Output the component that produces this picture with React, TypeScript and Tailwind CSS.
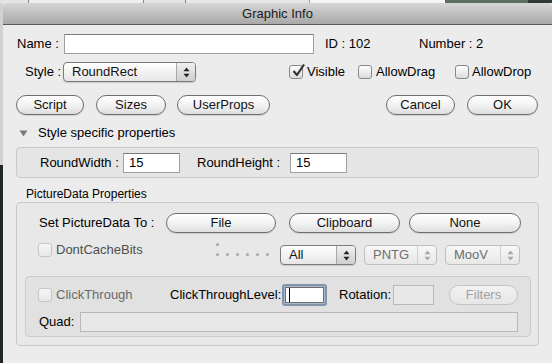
import React from "react";

const Btn = ({ label, w, disabled = false }: { label: string; w: string; disabled?: boolean }) => (
  <div
    className={`${w} h-[20px] shrink-0 rounded-full border flex items-center justify-center text-[13px] ${
      disabled
        ? "border-[#c4c4c4] text-[#a2a2a2] bg-linear-to-b from-[#f2f2f2] to-[#e6e6e6]"
        : "border-[#6e6e6e] text-[#111] bg-linear-to-b from-[#ffffff] via-[#f3f3f3] to-[#dedede] shadow-[0_1px_1px_rgba(0,0,0,0.12)]"
    }`}
  >
    {label}
  </div>
);

const Arrows = ({ color }: { color: string }) => (
  <svg width="7" height="11" viewBox="0 0 7 11">
    <path d="M3.5 0.5 L6.5 4.2 L0.5 4.2 Z" fill={color} />
    <path d="M3.5 10.5 L6.5 6.8 L0.5 6.8 Z" fill={color} />
  </svg>
);

const Popup = ({ label, w, disabled = false }: { label: string; w: string; disabled?: boolean }) => (
  <div
    className={`${w} h-[20px] shrink-0 rounded-[4px] border flex items-stretch text-[13px] overflow-hidden ${
      disabled
        ? "border-[#c0c0c0] text-[#6e6e6e] bg-linear-to-b from-[#f7f7f7] to-[#e8e8e8]"
        : "border-[#7a7a7a] text-[#111] bg-linear-to-b from-[#ffffff] to-[#e6e6e6] shadow-[0_1px_1px_rgba(0,0,0,0.15)]"
    }`}
  >
    <div className="flex-1 flex items-center pl-[8px]">{label}</div>
    <div
      className={`w-[19px] flex items-center justify-center border-l ${
        disabled ? "border-[#d0d0d0]" : "border-[#a8a8a8] bg-linear-to-b from-[#f0f0f0] to-[#cfcfcf]"
      }`}
    >
      <Arrows color={disabled ? "#a8a8a8" : "#222"} />
    </div>
  </div>
);

const Check = ({ checked = false, disabled = false }: { checked?: boolean; disabled?: boolean }) => (
  <div
    className={`w-[14px] h-[14px] shrink-0 rounded-[3px] border relative ${
      disabled
        ? "border-[#c6c6c6] bg-linear-to-b from-[#f6f6f6] to-[#e8e8e8]"
        : "border-[#888] bg-linear-to-b from-[#ffffff] to-[#dcdcdc]"
    }`}
  >
    {checked && (
      <svg className="absolute -top-[3px] left-[1px]" width="15" height="15" viewBox="0 0 15 15">
        <path d="M2.5 8 L6 12 L13 1.5" stroke="#333" strokeWidth="2.2" fill="none" strokeLinejoin="round" />
      </svg>
    )}
  </div>
);

const Field = ({ w, value, disabled = false }: { w: string; value?: string; disabled?: boolean }) => (
  <div
    className={`${w} h-[20px] shrink-0 border flex items-center pl-[5px] text-[13px] ${
      disabled
        ? "h-[19px] bg-[#e8e8e8] border-[#b8b8b8]"
        : "bg-white border-[#a0a0a0] border-t-[#7c7c7c]"
    }`}
  >
    {value}
  </div>
);

export default function App() {
  return (
    <div className="w-[552px] h-[363px] overflow-hidden bg-[#ececec] font-['Liberation_Sans',Arial,sans-serif] text-black flex flex-col">
      {/* desktop strip behind the sheet */}
      <div className="h-[3px] flex shrink-0">
        <div className="w-[28px] bg-[#e4e4e4]" />
        <div className="w-[1px] bg-[#8a8a8a]" />
        <div className="w-[114px] bg-[#eeeeee]" />
        <div className="w-[1px] bg-[#8a8a8a]" />
        <div className="w-[41px] bg-[#e2e2e2]" />
        <div className="w-[1px] bg-[#8a8a8a]" />
        <div className="w-[123px] bg-[#e6e6e6]" />
        <div className="w-[1px] bg-[#9a9a9a]" />
        <div className="w-[135px] bg-[#f4f4f4]" />
        <div className="w-[83px] bg-[#5d6d62]" />
        <div className="flex-1 bg-[#2f3a33]" />
      </div>

      <div className="flex flex-1">
        <div className="w-[3px] shrink-0 flex flex-col">
          <div className="h-[162px] bg-[#d2d2d2]" />
          <div className="flex-1 bg-[#1f2924]" />
        </div>

        <div className="flex-1 flex flex-col rounded-tl-[4px] rounded-tr-[4px] overflow-hidden bg-[#ececec]">
          {/* title bar */}
          <div className="h-[22px] shrink-0 border-b border-[#5a5a5a] bg-linear-to-b from-[#d6d6d6] to-[#a9a9a9] flex items-center justify-center text-[13px] text-[#1a1a1a]">
            Graphic Info
          </div>

          {/* Name row */}
          <div className="flex items-center h-[20px] mt-[9px] ml-[14px] text-[13px]">
            <div className="w-[47px]">Name :</div>
            <Field w="w-[250px]" />
            <div className="w-[94px] ml-[11px]">ID : 102</div>
            <div>Number : 2</div>
          </div>

          {/* Style row */}
          <div className="flex items-center h-[20px] mt-[8px] ml-[22px] text-[13px]">
            <div className="w-[38px]">Style :</div>
            <Popup label="RoundRect" w="w-[133px]" />
            <div className="ml-[93px] w-[69px] flex items-center gap-[4px]">
              <Check checked />
              <span>Visible</span>
            </div>
            <div className="w-[97px] flex items-center gap-[4px]">
              <Check />
              <span>AllowDrag</span>
            </div>
            <div className="flex items-center gap-[3px]">
              <Check />
              <span>AllowDrop</span>
            </div>
          </div>

          {/* buttons row */}
          <div className="flex items-center mt-[13px] ml-[13px]">
            <Btn label="Script" w="w-[68px]" />
            <div className="ml-[12px]">
              <Btn label="Sizes" w="w-[70px]" />
            </div>
            <div className="ml-[11px]">
              <Btn label="UserProps" w="w-[93px]" />
            </div>
            <div className="ml-[116px]">
              <Btn label="Cancel" w="w-[69px]" />
            </div>
            <div className="ml-[12px]">
              <Btn label="OK" w="w-[71px]" />
            </div>
          </div>

          {/* disclosure */}
          <div className="flex items-center h-[16px] mt-[10px] ml-[16px] text-[13px]">
            <svg width="9" height="7" viewBox="0 0 9 7">
              <path d="M0.5 0.5 L8.5 0.5 L4.5 6.5 Z" fill="#7b7b7b" />
            </svg>
            <span className="ml-[10px]">Style specific properties</span>
          </div>

          {/* Style specific box */}
          <div className="mt-[6px] ml-[13px] w-[523px] h-[31px] rounded-[4px] border border-[#c9c9c9] bg-[#e5e5e5] flex items-center pl-[23px] text-[13px]">
            <div className="w-[83px]">RoundWidth :</div>
            <Field w="w-[57px]" value="15" />
            <div className="w-[93px] ml-[17px]">RoundHeight :</div>
            <Field w="w-[57px]" value="15" />
          </div>

          <div className="h-[14px] mt-[9px] ml-[23px] flex items-center text-[12px]">PictureData Properties</div>

          {/* PictureData box */}
          <div className="mt-[1px] ml-[13px] w-[523px] h-[144px] rounded-[4px] border border-[#c9c9c9] bg-[#e8e8e8] flex flex-col text-[13px]">
            <div className="flex items-center mt-[10px] ml-[22px] h-[20px]">
              <div className="w-[127px]">Set PictureData To :</div>
              <Btn label="File" w="w-[110px]" />
              <div className="ml-[13px]">
                <Btn label="Clipboard" w="w-[111px]" />
              </div>
              <div className="ml-[9px]">
                <Btn label="None" w="w-[112px]" />
              </div>
            </div>

            <div className="flex items-start mt-[7px] ml-[21px] h-[25px]">
              <div className="w-[178px] flex items-center gap-[4px] text-[#4e4e4e]">
                <Check disabled />
                <span>DontCacheBits</span>
              </div>
              <div className="w-[64px] flex flex-col pt-[3px] gap-[7px]">
                <div className="w-[3px] h-[3px] rounded-full bg-[#a9a9a9]" />
                <div className="flex gap-[7px]">
                  {[0, 1, 2, 3, 4, 5].map((i) => (
                    <div key={i} className="w-[3px] h-[3px] rounded-full bg-[#a9a9a9]" />
                  ))}
                </div>
              </div>
              <div className="mt-[5px] flex gap-[8px]">
                <Popup label="All" w="w-[76px]" />
                <Popup label="PNTG" w="w-[73px]" disabled />
                <Popup label="MooV" w="w-[75px]" disabled />
              </div>
            </div>

            {/* inner box */}
            <div className="mt-[11px] ml-[8px] w-[506px] h-[61px] rounded-[4px] border border-[#cbcbcb] bg-[#e1e1e1] flex flex-col">
              <div className="flex items-center mt-[7px] ml-[12px] h-[22px]">
                <div className="w-[132px] flex items-center gap-[4px] text-[#6a6a6a]">
                  <Check disabled />
                  <span>ClickThrough</span>
                </div>
                <div className="w-[112px]">ClickThroughLevel:</div>
                <div className="w-[45px] h-[22px] rounded-[3px] border-2 border-[#8393aa] bg-[#aab8cc] p-[1px]">
                  <div className="w-full h-full bg-white border border-[#6e6e6e] flex items-center pl-[3px]">
                    <div className="w-[1px] h-[14px] bg-black" />
                  </div>
                </div>
                <div className="w-[54px] ml-[12px]">Rotation:</div>
                <Field w="w-[41px]" disabled />
                <div className="ml-[15px]">
                  <Btn label="Filters" w="w-[69px]" disabled />
                </div>
              </div>
              <div className="flex items-center mt-[6px] ml-[13px] h-[19px]">
                <div className="w-[41px]">Quad:</div>
                <Field w="w-[438px]" disabled />
              </div>
            </div>
          </div>
        </div>
      </div>
    </div>
  );
}
